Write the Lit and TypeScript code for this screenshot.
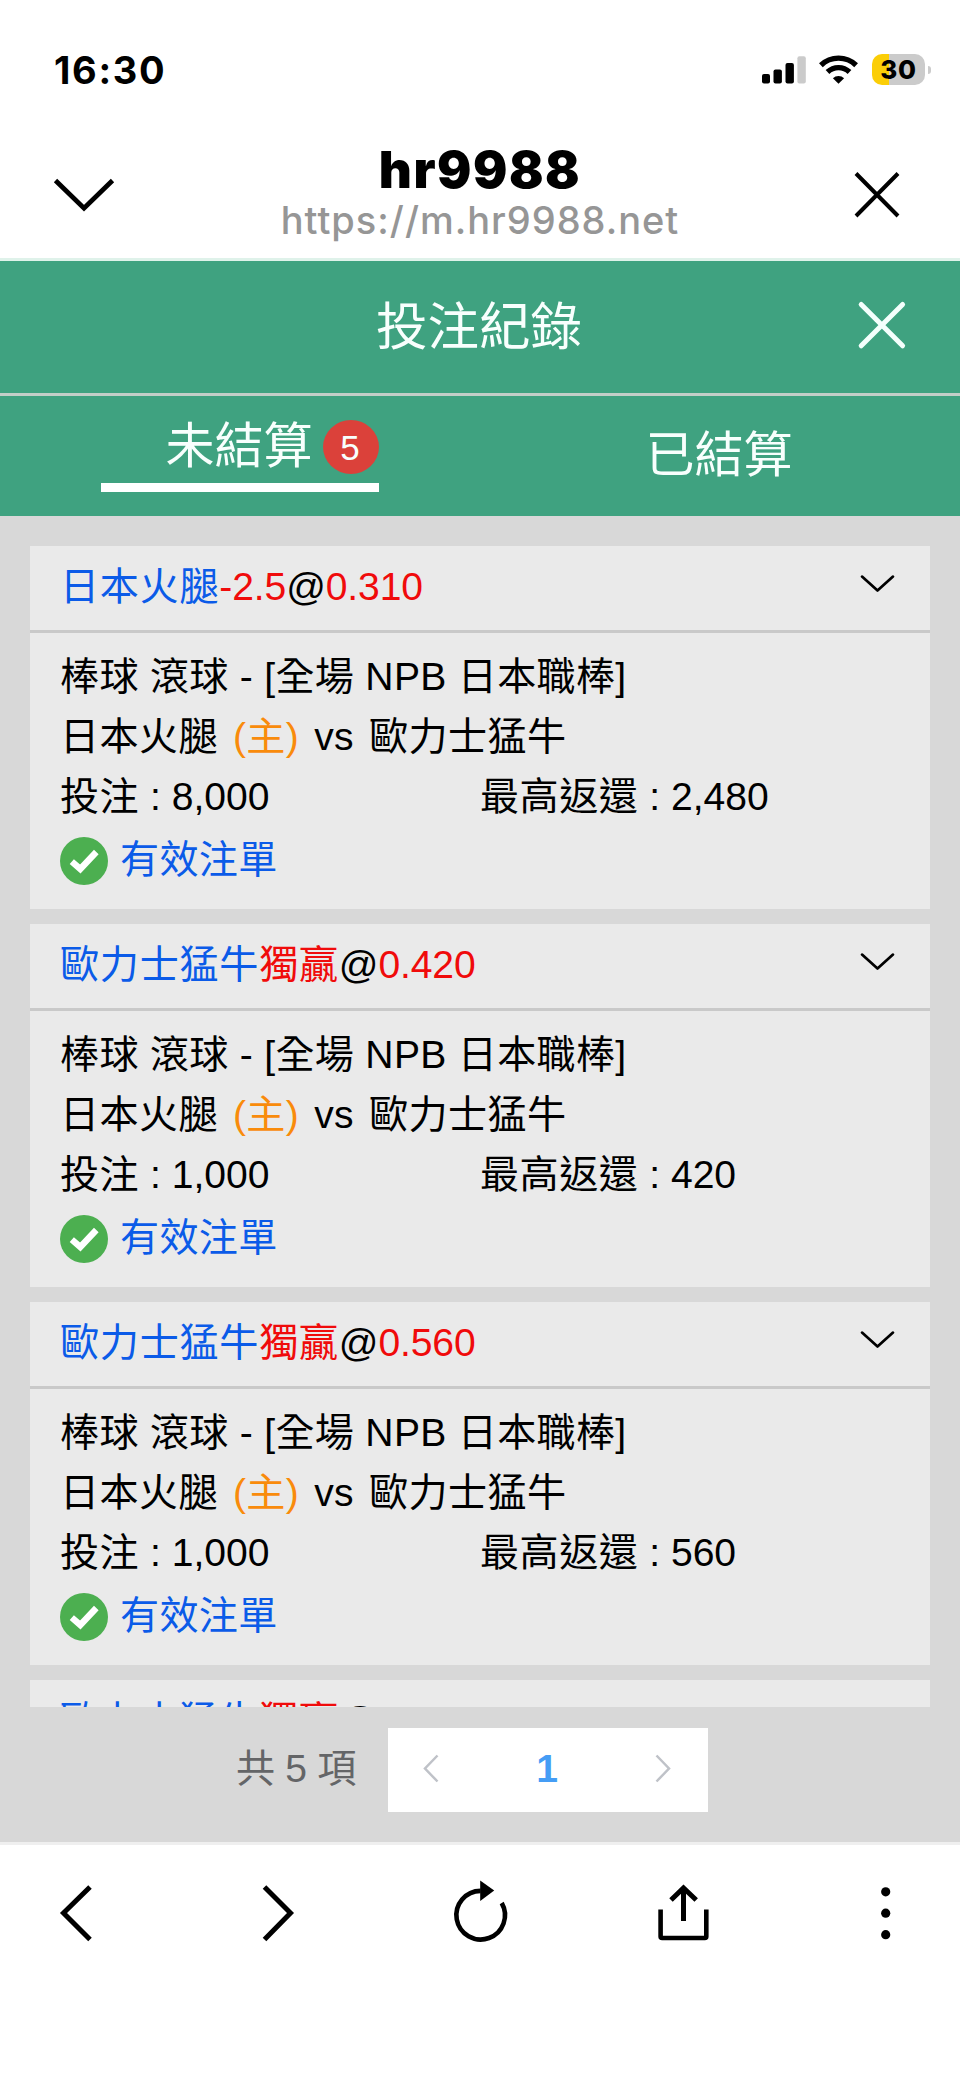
import { LitElement, html, css } from "lit";
import { customElement, property } from "lit/decorators.js";

interface Bet {
  team: string;
  handicap?: string;
  market?: string;
  odds: string;
  stake: string;
  payout: string;
}

const bets: Bet[] = [
  { team: "日本火腿", handicap: "-2.5", odds: "0.310", stake: "8,000", payout: "2,480" },
  { team: "歐力士猛牛", market: "獨贏", odds: "0.420", stake: "1,000", payout: "420" },
  { team: "歐力士猛牛", market: "獨贏", odds: "0.560", stake: "1,000", payout: "560" },
  { team: "歐力士猛牛", market: "獨贏", odds: "0.600", stake: "1,000", payout: "600" },
];

@customElement("status-bar")
class StatusBar extends LitElement {
  static styles = css`
    :host { display: flex; justify-content: space-between; height: 139px; font-family: Inter, sans-serif; color: #000; }
    .time { margin: 47px 0 0 54px; font-size: 38px; line-height: 46px; font-weight: 750; letter-spacing: 1.7px; }
    .icons { display: flex; align-items: flex-start; padding: 54px 29px 0 0; }
    .signal, .wifi { display: block; }
    .wifi { margin-left: 13px; }
    .battery { display: flex; align-items: center; justify-content: center; margin-left: 14px; width: 53px; height: 31px; border-radius: 10px;
      background: linear-gradient(90deg, #fbce07 17px, #cbcbcb 17px); font-size: 26px; font-weight: 800; line-height: 31px; letter-spacing: 0.8px; }
    .tip { margin: 12px 0 0 3px; width: 3px; height: 8px; border-radius: 0 3px 3px 0; background: #cbcbcb; }
  `;
  render() {
    return html`
      <div class="time">16:30</div>
      <div class="icons">
        <svg class="signal" width="44" height="31" viewBox="0 0 44 31">
          <rect x="0" y="20" width="8" height="9.6" rx="2"></rect>
          <rect x="11.5" y="15.5" width="8.4" height="14.1" rx="2"></rect>
          <rect x="23.5" y="9" width="8.4" height="20.6" rx="2"></rect>
          <rect x="35.4" y="2.2" width="8.4" height="27.4" rx="2" fill="#cbcbcb"></rect>
        </svg>
        <svg class="wifi" width="39" height="31" viewBox="0 0 39 31">
          <g fill="none" stroke="#000" stroke-width="5.4">
            <path d="M1.9 11.2 A25.5 25.5 0 0 1 37.1 11.2"></path>
            <path d="M8.5 18 A16 16 0 0 1 30.5 18"></path>
          </g>
          <path d="M19.5 29.8 L13.9 24.2 A8 8 0 0 1 25.1 24.2 Z"></path>
        </svg>
        <div class="battery">30</div>
        <div class="tip"></div>
      </div>`;
  }
}

@customElement("browser-header")
class BrowserHeader extends LitElement {
  static styles = css`
    :host { display: grid; grid-template-columns: 168px 1fr 168px; height: 119px; border-bottom: 3px solid #dff2ea; font-family: Inter, sans-serif; }
    .down { margin: 36px 0 0 50px; }
    .close { margin: 30px 0 0 58px; }
    .titles { text-align: center; white-space: nowrap; padding-top: 1px; }
    .name { font-size: 51px; line-height: 60px; font-weight: 900; color: #000; letter-spacing: 1.5px; }
    .url { font-size: 38px; line-height: 46px; font-weight: 550; color: #969696; letter-spacing: 1px; margin-top: -3px; }
  `;
  render() {
    return html`
      <svg class="down" width="68" height="42" viewBox="0 0 68 42" fill="none" stroke="#000" stroke-width="4.8">
        <path d="M5.5 5.5 L34 33.2 L62.5 5.5"></path>
      </svg>
      <div class="titles">
        <div class="name">hr9988</div>
        <div class="url">https://m.hr9988.net</div>
      </div>
      <svg class="close" width="54" height="54" viewBox="0 0 54 54" fill="none" stroke="#000" stroke-width="4">
        <path d="M6 4.5 L48 47 M48 4.5 L6 47"></path>
      </svg>`;
  }
}

@customElement("bet-card")
class BetCard extends LitElement {
  @property({ attribute: false }) bet!: Bet;
  static styles = css`
    :host { display: block; flex: none; height: 363px; background: #eaeaea; white-space: nowrap; }
    .head { display: flex; justify-content: space-between; height: 84px; padding: 0 30px; border-bottom: 3px solid #c9c9c9; line-height: 81px; }
    .pick { letter-spacing: -0.12px; }
    .team, .state { color: #0b5be8; }
    .team, .market { letter-spacing: 0.75px; }
    .red { color: #f00b0b; }
    .chev { margin: 28px 5px 0 0; }
    .body { padding: 14px 30px 0; line-height: 60px; }
    .league { letter-spacing: 0.3px; }
    .teams { letter-spacing: 0.4px; word-spacing: 3.7px; }
    .home { color: #f98b0b; }
    .amounts { display: grid; grid-template-columns: 1fr 1fr; }
    .label { letter-spacing: 0.5px; }
    .valid { display: flex; align-items: center; gap: 12px; height: 48px; margin-top: 10px; }
    .state { line-height: 48px; letter-spacing: 0.3px; position: relative; top: -1px; }
  `;
  render() {
    const b = this.bet;
    return html`
      <div class="head">
        <div class="pick"><span class="team">${b.team}</span><span class="red">${b.handicap}<span class="market">${b.market}</span></span>@<span class="red">${b.odds}</span></div>
        <svg class="chev" width="35" height="20" viewBox="0 0 35 20" fill="none" stroke="#000" stroke-width="2.7" stroke-linecap="round" stroke-linejoin="round">
          <path d="M2 2.6 L17.5 16.6 L33 2.6"></path>
        </svg>
      </div>
      <div class="body">
        <div class="league">棒球 滾球 - [全場 NPB 日本職棒]</div>
        <div class="teams">日本火腿 <span class="home">(主)</span> vs 歐力士猛牛</div>
        <div class="amounts"><div><span class="label">投注</span> : ${b.stake}</div><div><span class="label">最高返還</span> : ${b.payout}</div></div>
        <div class="valid">
          <svg width="48" height="48" viewBox="0 0 48 48">
            <circle cx="24" cy="24" r="24" fill="#4caf50"></circle>
            <path d="M11.8 24.6 L20.3 32 L36.3 15" fill="none" stroke="#fff" stroke-width="6.4"></path>
          </svg>
          <span class="state">有效注單</span>
        </div>
      </div>`;
  }
}

@customElement("browser-toolbar")
class BrowserToolbar extends LitElement {
  static styles = css`
    :host { display: flex; justify-content: space-between; align-items: flex-start; height: 234px; padding: 30px 44px 0 45px; box-sizing: border-box; border-top: 3px solid #efefef; background: #fff; }
  `;
  render() {
    return html`
      <svg width="64" height="76" viewBox="45 1875 64 76" fill="none" stroke="#000" stroke-width="5"><path d="M90 1887 L63.5 1913 L90 1939.5"></path></svg>
      <svg width="64" height="76" viewBox="247.5 1875 64 76" fill="none" stroke="#000" stroke-width="5"><path d="M265 1887 L291 1913 L265 1939.5"></path></svg>
      <svg width="64" height="76" viewBox="449.3 1875 64 76" fill="none" stroke="#000" stroke-width="4.6">
        <path d="M502 1903 A24.3 24.3 0 1 1 481 1890.9"></path>
        <path d="M480.5 1880.6 L494.5 1890.6 L480.5 1901 Z" fill="#000" stroke="none"></path>
      </svg>
      <svg width="64" height="76" viewBox="650.2 1875 64 76" fill="none" stroke="#000" stroke-width="4.6">
        <path d="M660.8 1909.5 V1936.5 Q660.8 1938 662.3 1938 H705 Q706.5 1938 706.5 1936.5 V1909.5"></path>
        <path d="M683.7 1921 V1888 M671.2 1900 L683.7 1888 L696.4 1900" stroke-width="5"></path>
      </svg>
      <svg width="64" height="76" viewBox="852 1875 64 76">
        <circle cx="885.7" cy="1891.8" r="4.6"></circle><circle cx="885.7" cy="1913.2" r="4.6"></circle><circle cx="885.7" cy="1934.7" r="4.6"></circle>
      </svg>`;
  }
}

@customElement("app-root")
class AppRoot extends LitElement {
  static styles = css`
    :host { display: flex; flex-direction: column; width: 960px; height: 2079px; overflow: hidden; background: #fff; color: #000;
      font-family: "Liberation Sans", "Noto Sans CJK TC", sans-serif; font-size: 39.1px; }
    .title-bar { display: grid; grid-template-columns: 120px 1fr 120px; height: 132px; background: #3fa280; border-bottom: 3px solid #c3cfc8; color: #f8fffd; text-align: center; }
    .title { grid-column: 2; font-size: 51.5px; line-height: 132px; padding-right: 2px; }
    .exit { margin: 37px 0 0 14px; }
    .tabs { display: grid; grid-template-columns: 1fr 1fr; justify-items: center; height: 120px; background: #3fa280; color: #f8fffd; font-size: 49px; }
    .tab { display: grid; grid-template-columns: 1fr auto 1fr; align-items: center; box-sizing: border-box; width: 278px; height: 96px; border-bottom: 9px solid #fff; }
    .tab-label { grid-column: 2; line-height: 60px; margin: 12px 2px 0 0; }
    .badge { justify-self: end; width: 56px; height: 54px; margin-top: 15px; border-radius: 50%; background: #db413a; font-size: 35px; line-height: 55px; text-align: center; box-sizing: border-box; padding-right: 2px; }
    .tab.off { border-bottom-color: transparent; }
    .off .tab-label { margin-top: 29px; }
    .content { display: flex; flex-direction: column; height: 1326px; background: #d8d8d8; }
    .list { display: flex; flex-direction: column; gap: 15px; height: 1161px; margin: 30px 30px 0; overflow: hidden; }
    .pager { display: flex; justify-content: flex-start; align-items: center; margin: 21px 0 0 236px; height: 84px; white-space: nowrap; }
    .total { width: 152px; color: #646567; line-height: 82px; height: 84px; word-spacing: -0.6px; }
    .pages { display: flex; align-items: center; justify-content: space-between; box-sizing: border-box; width: 320px; height: 84px; padding: 0 37px 3px 35px; background: #fff; }
    .page { color: #459df5; font-weight: 700; line-height: 78px; }
  `;
  render() {
    return html`
      <status-bar></status-bar>
      <browser-header></browser-header>
      <div class="title-bar">
        <div class="title">投注紀錄</div>
        <svg class="exit" width="54" height="54" viewBox="0 0 54 54" fill="none" stroke="#f4fffc" stroke-width="5" stroke-linecap="round">
          <path d="M7.2 6.4 L48.6 47.8 M48.6 6.4 L7.2 47.8"></path>
        </svg>
      </div>
      <div class="tabs">
        <div class="tab"><div class="tab-label">未結算</div><div class="badge">5</div></div>
        <div class="tab off"><div class="tab-label">已結算</div></div>
      </div>
      <div class="content">
        <div class="list">${bets.map((b) => html`<bet-card .bet=${b}></bet-card>`)}</div>
        <div class="pager">
          <div class="total">共 5 項</div>
          <div class="pages">
            <svg width="16" height="29" viewBox="0 0 16 29" fill="none" stroke="#bfc2c8" stroke-width="2.5"><path d="M14.5 1.5 L2 14.5 L14.5 27.5"></path></svg>
            <span class="page">1</span>
            <svg width="16" height="29" viewBox="0 0 16 29" fill="none" stroke="#bfc2c8" stroke-width="2.5"><path d="M1.5 1.5 L14 14.5 L1.5 27.5"></path></svg>
          </div>
        </div>
      </div>
      <browser-toolbar></browser-toolbar>`;
  }
}
